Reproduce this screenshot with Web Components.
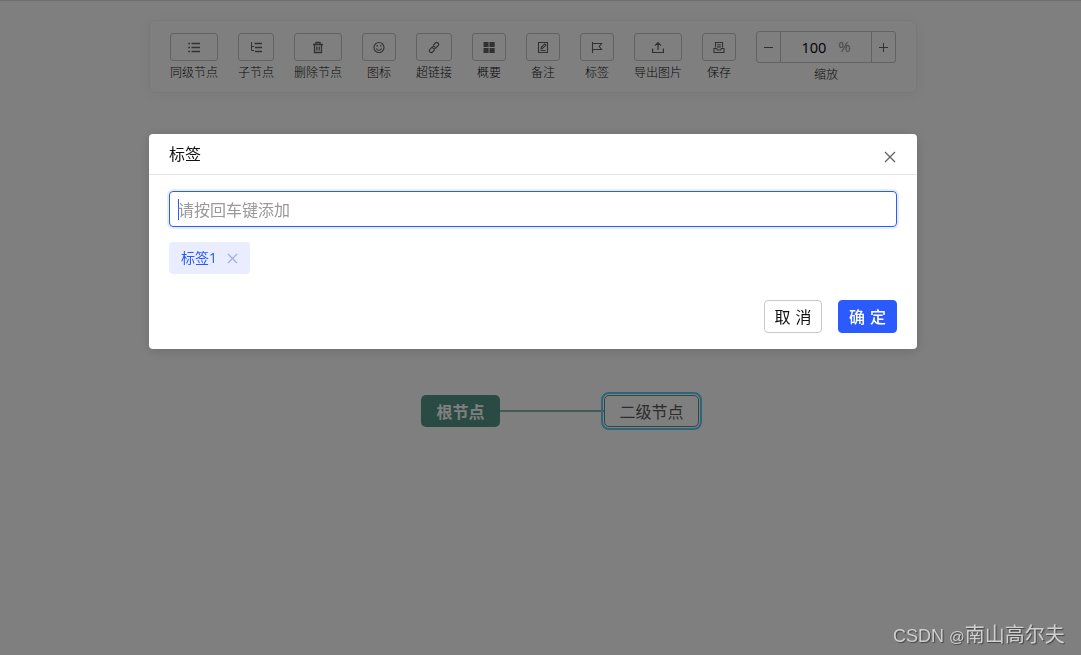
<!DOCTYPE html>
<html lang="zh-CN">
<head>
<meta charset="utf-8">
<title>思维导图</title>
<style>
  html, body {
    margin: 0;
    height: 100%;
    overflow: hidden;
    background: #fff;
    font-family: "Open Sans", "Noto Sans CJK SC", sans-serif;
  }
</style>
</head>
<body>
<mind-page>
  <tool-bar slot="toolbar">
    <tool-item label="同级节点" icon="list"></tool-item>
    <tool-item label="子节点" icon="tree"></tool-item>
    <tool-item label="删除节点" icon="trash"></tool-item>
    <tool-item label="图标" icon="smile"></tool-item>
    <tool-item label="超链接" icon="link"></tool-item>
    <tool-item label="概要" icon="grid"></tool-item>
    <tool-item label="备注" icon="note"></tool-item>
    <tool-item label="标签" icon="flag"></tool-item>
    <tool-item label="导出图片" icon="export"></tool-item>
    <tool-item label="保存" icon="save"></tool-item>
    <zoom-control label="缩放" value="100"></zoom-control>
  </tool-bar>

  <mind-map slot="map">
    <mind-node type="root">根节点</mind-node>
    <mind-node type="second" active>二级节点</mind-node>
  </mind-map>

  <app-modal slot="modal">
    <span slot="title">标签</span>
    <tag-input>请按回车键添加</tag-input>
    <app-tag>标签1</app-tag>
    <app-button slot="footer">取 消</app-button>
    <app-button slot="footer" type="primary">确 定</app-button>
  </app-modal>

  <water-mark slot="mark">CSDN <span class="at">@</span><span class="handle">南山高尔夫</span></water-mark>
</mind-page>

<script>
const icons = {
  list: '<path d="M.3 2.500h1.700M.3 6.500h1.700M.3 10.500h1.700M3.500 2.500H12M3.500 6.500H12M3.500 10.500H12" stroke-width="1.400"/>',
  tree: '<path d="M1.500 1v8.500H4M1.500 5.500H4" stroke-width="1"/><path d="M4.500 2.500H12M5 6.500h7M5 10.500h7" stroke-width="1.300"/>',
  trash: '<path d="M1 3.500h10M4 3V1.500h4V3M2.500 3.500v8h7v-8M4.800 5.500v4M7.200 5.500v4" stroke-width="1.300"/>',
  smile: '<circle cx="6" cy="6.500" r="5"/><path d="M3.500 7.300c.6 2.600 4.400 2.600 5 0"/><path d="M4.200 4v1.400M7.800 4v1.400" stroke-width="1.300"/>',
  link: '<path d="M5.200 4.300 7.400 2c1.700-1.700 4.500.8 2.700 2.700L7.700 7.200C6.600 8.200 5 7.700 4.700 6.500M6.800 8.700 4.600 11C2.900 12.700.1 10.200 1.900 8.300L4.300 5.800C5.400 4.800 7 5.300 7.300 6.500"/>',
  grid: '<path d="M.5 1H5.600v5H.5zM6.500 1h5.200v5H6.500zM.5 7h5.100v5H.5zM6.500 7h5.200v5H6.500z" fill="currentColor" stroke="none"/>',
  note: '<path d="M1.500 1.500h9v10h-9zM3.500 9.500h5M4 7.800l.4-1.700L7.800 2.900 9 4.100 5.600 7.300z"/>',
  flag: '<path d="M1.500 1v11M1.500 2.500h9L8.300 5.500l2.200 3h-9"/>',
  export: '<path d="M.6 7.500v4h10.800v-4M6 9V2M3 4.700 6 1.700l3 3" stroke-width="1.200"/>',
  save: '<path d="M2.500 6.500v-5h7v5M4.200 3.800h3.600M4.200 5.900h3.600M1 7.500h2.700l.7 1.500h3.200l.7-1.500H11v4H1z"/>',
};

function define(name, html, setup) {
  customElements.define(name, class extends HTMLElement {
    constructor() {
      super();
      this.attachShadow({ mode: "open" }).innerHTML = html;
    }

    connectedCallback() {
      if (setup) setup(this, this.shadowRoot);
    }
  });
}

define("mind-page", `
  <style>
    :host {
      display: block;
      position: relative;
      height: 100%;
      box-sizing: border-box;
      border-top: 1px solid #dcdcdc;
    }

    .mask {
      position: fixed;
      inset: 0;
      background: rgba(0, 0, 0, .5);
    }
  </style>
  <slot name="toolbar"></slot>
  <slot name="map"></slot>
  <div class="mask"><slot name="modal"></slot></div>
  <slot name="mark"></slot>
`);

define("tool-bar", `
  <style>
    :host {
      display: flex;
      gap: 20px;
      box-sizing: border-box;
      width: 768px;
      height: 73px;
      margin: 19px 0 0 149px;
      padding: 0 20px;
      border: 1px solid rgba(0, 0, 0, .06);
      border-radius: 6px;
      box-shadow: 0 2px 16px rgba(0, 0, 0, .06);
    }
  </style>
  <slot></slot>
`);

define("tool-item", `
  <style>
    :host {
      display: flex;
      flex-direction: column;
      flex: none;
      align-items: center;
      padding-top: 12px;
      font-size: 12px;
      color: #101010;
    }

    .btn {
      display: flex;
      align-items: center;
      justify-content: center;
      box-sizing: border-box;
      width: 100%;
      min-width: 34px;
      height: 28px;
      border: 1px solid #c4c4c4;
      border-radius: 3px;
      color: #606266;
    }

    .label {
      line-height: 18px;
      margin-top: 3px;
      font-weight: 300;
      white-space: nowrap;
    }
  </style>
  <div class="btn">
    <svg width="12" height="13" viewBox="0 0 12 13" fill="none" stroke="currentColor" stroke-width="1.1"></svg>
  </div>
  <div class="label"></div>
`, (el, root) => {
  root.querySelector("svg").innerHTML = icons[el.getAttribute("icon")];
  root.querySelector(".label").textContent = el.getAttribute("label");
});

define("zoom-control", `
  <style>
    :host {
      display: flex;
      flex-direction: column;
      flex: none;
      align-items: center;
      padding-top: 10px;
    }

    .box {
      display: flex;
      box-sizing: border-box;
      width: 140px;
      height: 32px;
      border: 1px solid #c4c4c4;
      border-radius: 3px;
    }

    .step {
      display: grid;
      place-items: center;
      width: 23px;
      color: #606060;
    }

    .value {
      display: flex;
      flex: 1;
      gap: 12px;
      justify-content: center;
      border: solid #c4c4c4;
      border-width: 0 1px;
      font-size: 14.5px;
      line-height: 31px;
      color: #000;
    }

    .unit {
      font-size: 15px;
      line-height: 29px;
      color: #909090;
    }

    .label {
      margin-top: 3px;
      font-size: 12px;
      font-weight: 300;
      line-height: 18px;
      color: #101010;
    }
  </style>
  <div class="box">
    <div class="step"><svg width="11" height="11" fill="none" stroke="currentColor"><path d="M1 5.500h9"/></svg></div>
    <div class="value"><span class="num"></span><span class="unit">%</span></div>
    <div class="step"><svg width="11" height="11" fill="none" stroke="currentColor"><path d="M1 5.500h9M5.500 1v9"/></svg></div>
  </div>
  <div class="label"></div>
`, (el, root) => {
  root.querySelector(".num").textContent = el.getAttribute("value");
  root.querySelector(".label").textContent = el.getAttribute("label");
});

define("mind-map", `
  <style>
    :host {
      display: block;
    }

    /* nodes sit on a free canvas */
    ::slotted([type="root"]) {
      position: absolute;
      left: 421px;
      top: 394px;
    }

    ::slotted([type="second"]) {
      position: absolute;
      left: 604px;
      top: 394px;
    }

    svg {
      position: absolute;
      left: 500px;
      top: 409px;
    }
  </style>
  <svg width="104" height="2"><path d="M0 1h104" stroke="#549688" stroke-width="2" opacity=".7"/></svg>
  <slot></slot>
`);

define("mind-node", `
  <style>
    :host {
      display: block;
      box-sizing: border-box;
      height: 32px;
      border-radius: 5px;
      font-size: 16px;
      line-height: 34px;
      text-align: center;
      white-space: nowrap;
    }

    :host([type="root"]) {
      width: 79px;
      background: #549688;
      color: #fff;
      font-weight: bold;
    }

    :host([type="second"]) {
      width: 95px;
      border: 1px solid #549688;
      line-height: 32px;
      color: #565656;
    }

    :host([active]) {
      outline: 2px solid #5ec8f8;
      outline-offset: 1px;
    }
  </style>
  <slot></slot>
`);

define("app-modal", `
  <style>
    :host {
      display: flex;
      flex-direction: column;
      box-sizing: border-box;
      width: 768px;
      height: 215px;
      margin: 134px 0 0 149px;
      border-radius: 4px;
      background: #fff;
      box-shadow: 0 2px 12px rgba(0, 0, 0, .15);
    }

    header {
      display: flex;
      justify-content: space-between;
      box-sizing: border-box;
      height: 41px;
      padding: 0 20px;
      border-bottom: 1px solid #e4e4e4;
      font-size: 16px;
      line-height: 40px;
      color: #111;
    }

    header svg {
      margin: 17px 1px 0 0;
    }

    main {
      display: flex;
      flex-direction: column;
      flex: 1;
      gap: 15px;
      align-items: flex-start;
      padding: 16px 20px 0;
    }

    footer {
      display: flex;
      gap: 16px;
      justify-content: flex-end;
      padding: 0 20px 16px;
    }
  </style>
  <header>
    <slot name="title"></slot>
    <svg width="12" height="12" fill="none" stroke="#606266" stroke-width="1.300"><path d="M1 1l10 10M11 1 1 11"/></svg>
  </header>
  <main><slot></slot></main>
  <footer><slot name="footer"></slot></footer>
`);

define("tag-input", `
  <style>
    :host {
      display: flex;
      align-items: center;
      align-self: stretch;
      box-sizing: border-box;
      height: 36px;
      padding: 0 8px;
      border: 1px solid #2b5aff;
      border-radius: 4px;
      box-shadow: 0 0 0 2px #e9eeff;
      font-size: 16px;
      line-height: 34px;
      color: #999;
    }

    .caret {
      width: 1px;
      height: 21px;
      margin-right: -1px;
      background: #2b5aff;
    }

    .text {
      padding-top: 2px;
    }
  </style>
  <span class="caret"></span><span class="text"><slot></slot></span>
`);

define("app-tag", `
  <style>
    :host {
      display: flex;
      align-items: center;
      justify-content: space-between;
      box-sizing: border-box;
      width: 81px;
      height: 32px;
      padding: 0 12px;
      border-radius: 4px;
      background: #e9edff;
      font-size: 14px;
      line-height: 32px;
      color: #2b5aff;
    }
  </style>
  <span><slot></slot></span>
  <svg width="11" height="11" fill="none" stroke="#95adff" stroke-width="1.200"><path d="M1 1l9 9M10 1l-9 9"/></svg>
`);

define("app-button", `
  <style>
    :host {
      display: block;
      box-sizing: border-box;
      width: 58px;
      height: 33px;
      border: 1px solid #c8c8c8;
      border-radius: 4px;
      font-size: 16px;
      line-height: 32px;
      text-align: center;
      word-spacing: 1px;
      white-space: nowrap;
      color: #111;
    }

    :host([type="primary"]) {
      width: 59px;
      border-color: #2b5aff;
      background: #2b5aff;
      color: #fff;
      font-weight: 500;
    }
  </style>
  <slot></slot>
`);

define("water-mark", `
  <style>
    :host {
      display: block;
      position: absolute;
      left: 893px;
      top: 620px;
      font: 18px/29px "Liberation Sans", "Noto Sans CJK SC", sans-serif;
      white-space: nowrap;
      color: #d0d0d0;
      text-shadow: 1px 1px 1px #444;
    }

    ::slotted(.at) {
      font-size: 15.5px;
    }

    ::slotted(.handle) {
      font-size: 20px;
    }
  </style>
  <slot></slot>
`);
</script>
</body>
</html>
